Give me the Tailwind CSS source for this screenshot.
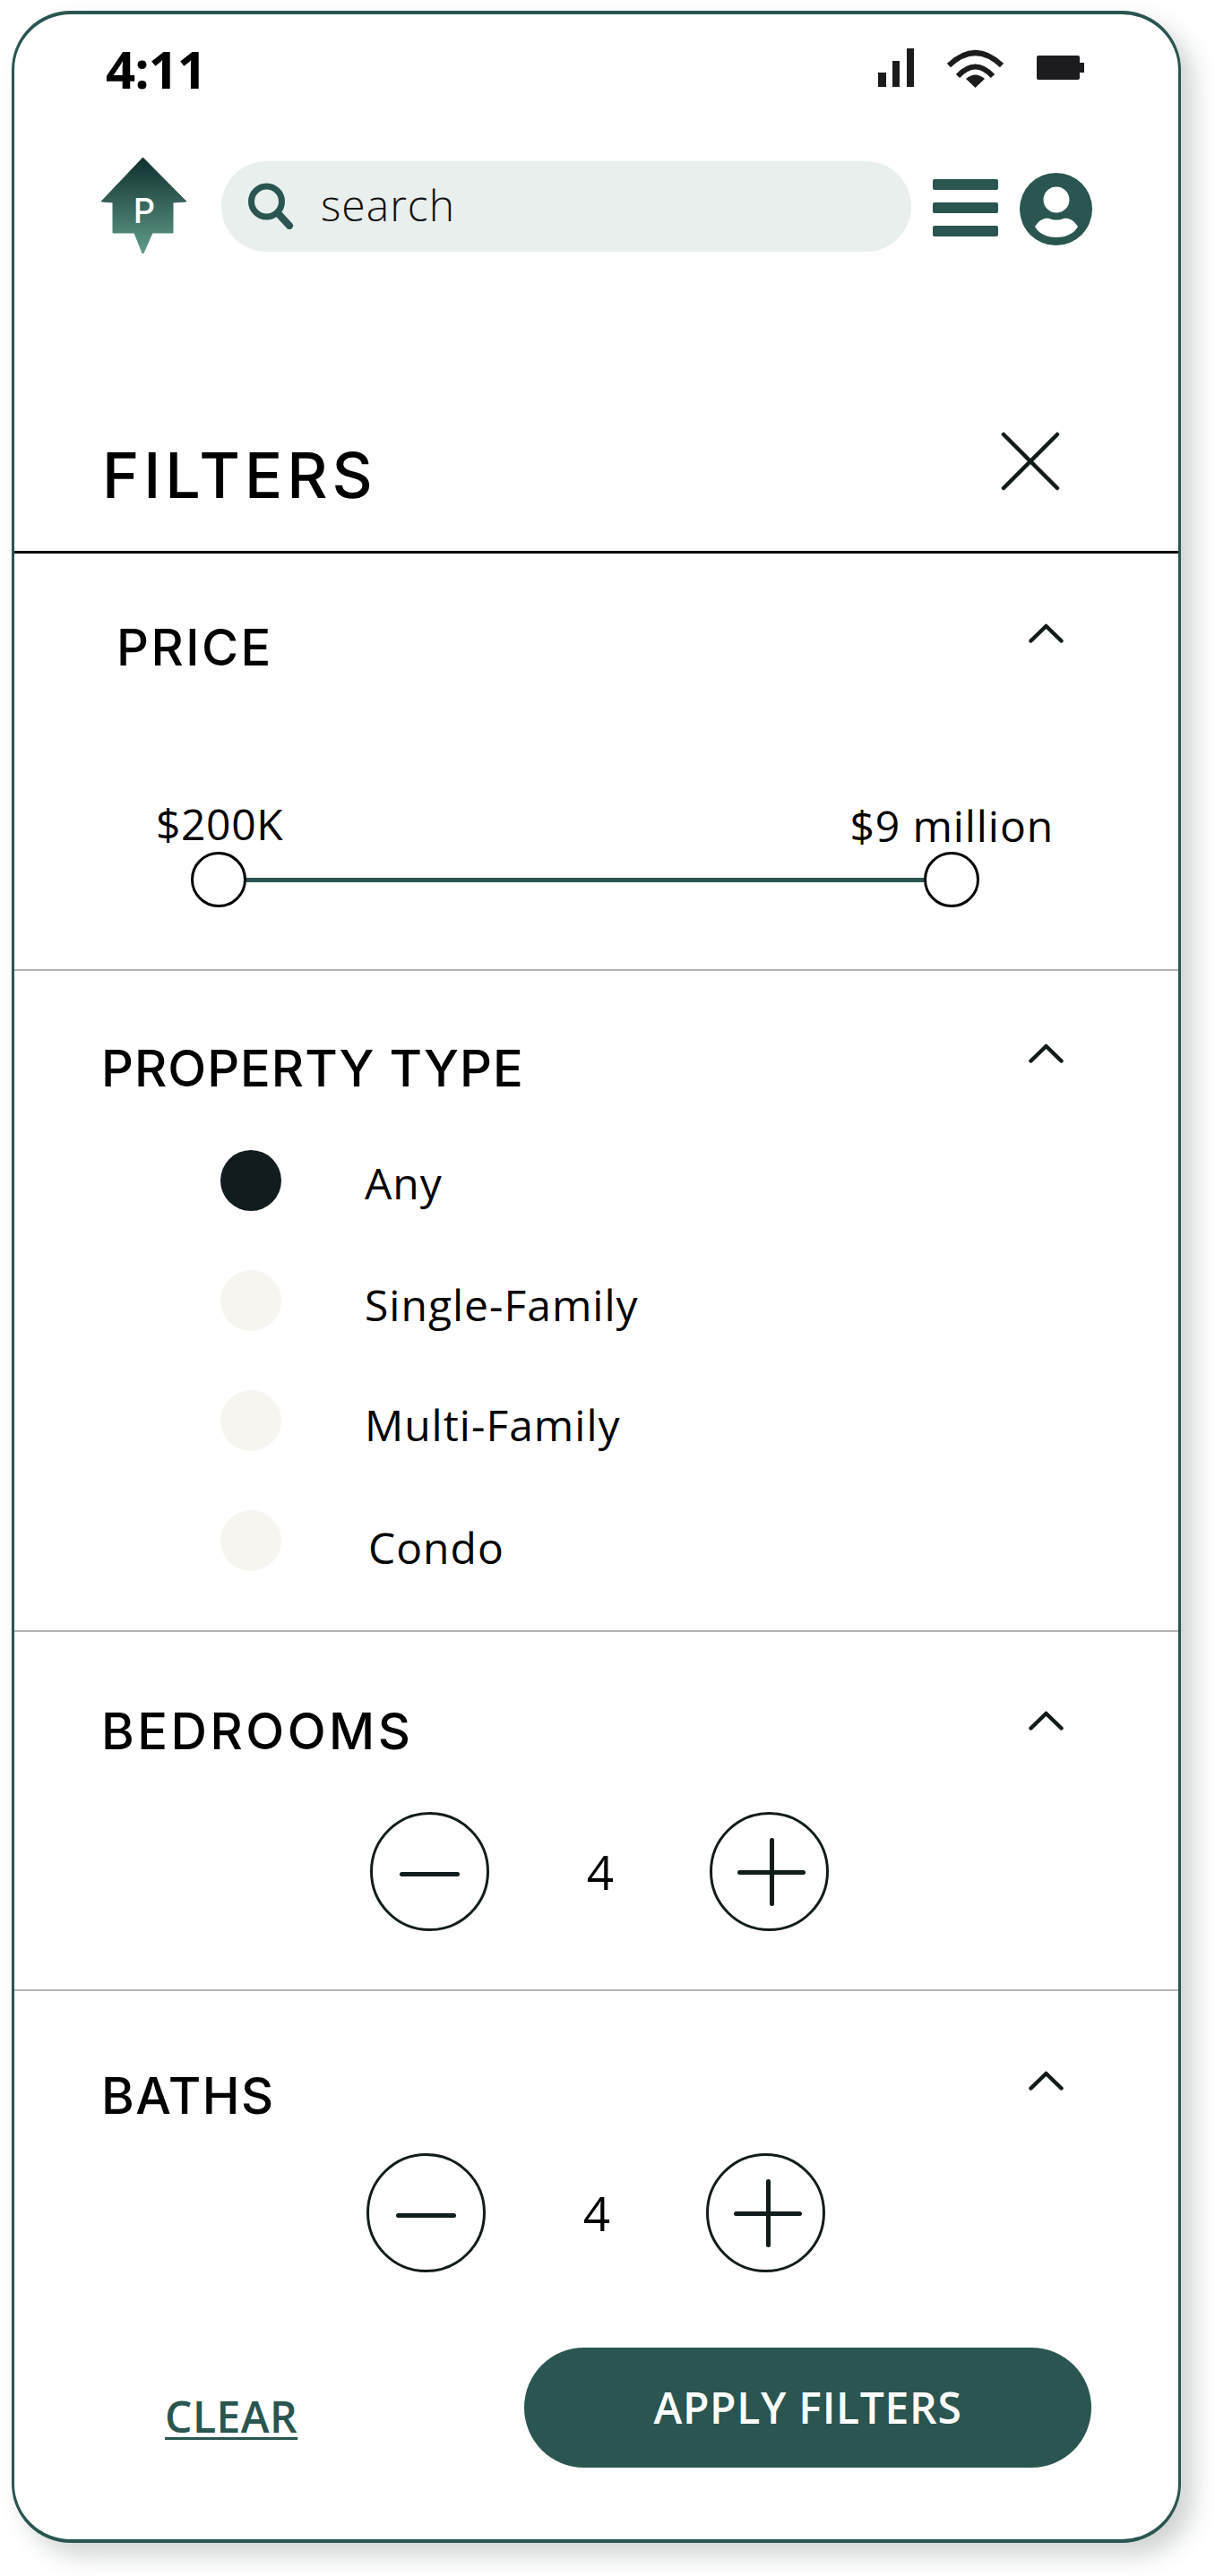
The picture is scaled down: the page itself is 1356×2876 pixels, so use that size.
<!doctype html>
<html>
<head>
  <meta charset="UTF-8">
  <meta name="viewport" content="width=device-width, initial-scale=1.0">
  <script src="https://cdn.jsdelivr.net/npm/@tailwindcss/browser@4"></script>
</head>
<body class="bg-white">
  <div class="w-[1356px] h-[2876px] pt-[12px] pl-[13px] overflow-hidden font-['Open_Sans',sans-serif] text-black">
    <div class="w-[1305px] h-[2827px] bg-white border-x-[3px] border-y-[4px] border-[#2a5550] rounded-[66px] shadow-[14px_14px_26px_rgba(40,60,55,0.22)]">

      <!-- status bar -->
      <div class="h-[122px] flex items-center justify-between pl-[102px] pr-[105px]">
        <span class="text-[58px] leading-none font-bold tracking-[-1px]">4:11</span>
        <div class="flex items-center gap-[37px] -mt-[3px]">
          <svg width="40" height="43" viewBox="0 0 40 43" fill="#1c1c1e"><rect x="0" y="27" width="9" height="16"/><rect x="16" y="14" width="8" height="29"/><rect x="32" y="0" width="8" height="43"/></svg>
          <svg width="63" height="45" viewBox="0 0 63 45" fill="none" stroke="#1c1c1e" stroke-width="6"><path d="M2 20 Q31.500 -8 61 20"/><path d="M12 32 Q31.500 11 51 32"/><path d="M21 35 Q31.500 26 42 35 L31.500 45 Z" fill="#1c1c1e" stroke="none"/></svg>
          <svg width="53" height="27" viewBox="0 0 53 27" fill="#1c1c1e"><rect x="0" y="0" width="48" height="27" rx="2"/><rect x="48" y="8" width="5" height="11"/></svg>
        </div>
      </div>

      <!-- header -->
      <div class="h-[184px] flex items-center pl-[96px]">
        <svg class="-mt-[2px]" width="96" height="107" viewBox="0 0 96 107">
          <defs><linearGradient id="logoFill" x1="0" y1="0" x2="0" y2="1"><stop offset="0" stop-color="#10302d"/><stop offset="1" stop-color="#5f9c8b"/></linearGradient></defs>
          <path d="M47.500 0 L96 49 L81 50 L81 84 L58 84 L48 107 L47 107 L38 84 L14 84 L14 50 L1 49 Z" fill="url(#logoFill)" stroke="url(#logoFill)" stroke-width="1" stroke-linejoin="round"/>
          <text x="49" y="73" text-anchor="middle" fill="#fff" font-size="38" font-weight="500" font-family="Inter, sans-serif">P</text>
        </svg>
        <div class="ml-[39px] w-[770px] h-[101px] rounded-full bg-[#e9efed] flex items-center pl-[30px]">
          <svg width="51" height="52" viewBox="0 0 51 52" fill="none" stroke="#2a5550"><circle cx="20.500" cy="21" r="17" stroke-width="7"/><path d="M34 35 L46 48" stroke-width="8" stroke-linecap="round"/></svg>
          <span class="ml-[30px] -mt-[3px] text-[48px] leading-none font-light tracking-[1px] text-[#111]">search</span>
        </div>
        <div class="ml-[24px] w-[73px] flex flex-col gap-[14px] mt-[3px]">
          <div class="h-[12px] rounded-[2px] bg-[#2a5550]"></div>
          <div class="h-[12px] rounded-[2px] bg-[#2a5550]"></div>
          <div class="h-[12px] rounded-[2px] bg-[#2a5550]"></div>
        </div>
        <svg class="ml-[24px] mt-[7px]" width="81" height="81" viewBox="0 0 81 81"><circle cx="40.500" cy="40.500" r="40.500" fill="#2a5550"/><circle cx="41" cy="30" r="14.500" fill="#fff"/><path d="M17 60 C22 52 28 50 33 51 C38 53 44 53 49 51 C54 50 60 52 65 60 C60 69 50 72 41 72 C32 72 22 69 17 60Z" fill="#fff"/></svg>
      </div>

      <!-- title -->
      <div class="h-[296px] border-b-[3px] border-black flex justify-between items-start pl-[98px] pr-[132px]">
        <h1 class="mt-[173px] text-[70px] leading-[72px] font-['Inter',sans-serif] font-medium tracking-[5px]">FILTERS</h1>
        <svg class="mt-[160px]" width="66" height="66" viewBox="0 0 66 66" stroke="#111c18" stroke-width="4.500" stroke-linecap="round"><path d="M3 3 L63 63 M63 3 L3 63"/></svg>
      </div>

      <!-- price -->
      <section class="h-[466px] border-b-2 border-[#b4b4b4] relative pt-[77px] pl-[114px] pr-[128px]">
        <div class="flex justify-between items-start">
          <h2 class="text-[56px] leading-[56px] font-['Inter',sans-serif] font-medium tracking-[2.500px]">PRICE</h2>
          <svg class="mt-[1px]" width="39" height="22" viewBox="0 0 39 22" fill="none" stroke="#111c18" stroke-width="4.500" stroke-linecap="round" stroke-linejoin="round"><path d="M2.500 19.500 L19.500 3 L36.500 19.500"/></svg>
        </div>
        <div class="absolute left-[158px] top-[274px] text-[48px] leading-[56px] tracking-[0.600px]">$200K</div>
        <div class="absolute right-[139px] top-[276px] text-[48px] leading-[56px] tracking-[0.900px]">$9 million</div>
        <div class="absolute left-[197px] right-[222px] top-[333px] flex items-center">
          <div class="w-[62px] h-[62px] rounded-full border-[3px] border-black bg-white shrink-0"></div>
          <div class="h-[5px] flex-1 bg-[#2a5550]"></div>
          <div class="w-[62px] h-[62px] rounded-full border-[3px] border-black bg-white shrink-0"></div>
        </div>
      </section>

      <!-- property type -->
      <section class="h-[738px] border-b-2 border-[#b4b4b4] pt-[81px] pl-[97px] pr-[128px]">
        <div class="flex justify-between items-start">
          <h2 class="text-[56px] leading-[56px] font-['Inter',sans-serif] font-medium tracking-[1px]">PROPERTY TYPE</h2>
          <svg width="39" height="22" viewBox="0 0 39 22" fill="none" stroke="#111c18" stroke-width="4.500" stroke-linecap="round" stroke-linejoin="round"><path d="M2.500 19.500 L19.500 3 L36.500 19.500"/></svg>
        </div>
        <div class="mt-[63px] pl-[133px] flex flex-col gap-[66px]">
          <div class="flex items-center h-[68px]"><span class="w-[68px] h-[68px] rounded-full bg-[#101c1e]"></span><span class="ml-[93px] text-[48px] leading-[56px] mt-[6px] tracking-[1px]">Any</span></div>
          <div class="flex items-center h-[68px]"><span class="w-[68px] h-[68px] rounded-full bg-[#f6f5f0]"></span><span class="ml-[93px] text-[48px] leading-[56px] mt-[10px] tracking-[1px]">Single-Family</span></div>
          <div class="flex items-center h-[68px]"><span class="w-[68px] h-[68px] rounded-full bg-[#f6f5f0]"></span><span class="ml-[93px] text-[48px] leading-[56px] mt-[10px] tracking-[1px]">Multi-Family</span></div>
          <div class="flex items-center h-[68px]"><span class="w-[68px] h-[68px] rounded-full bg-[#f6f5f0]"></span><span class="ml-[97px] text-[48px] leading-[56px] mt-[16px] tracking-[1px]">Condo</span></div>
        </div>
      </section>

      <!-- bedrooms -->
      <section class="h-[401px] border-b-2 border-[#b4b4b4] pt-[83px] pl-[97px] pr-[128px]">
        <div class="flex justify-between items-start">
          <h2 class="text-[56px] leading-[56px] font-['Inter',sans-serif] font-medium tracking-[3.500px]">BEDROOMS</h2>
          <svg class="mt-[5px]" width="39" height="22" viewBox="0 0 39 22" fill="none" stroke="#111c18" stroke-width="4.500" stroke-linecap="round" stroke-linejoin="round"><path d="M2.500 19.500 L19.500 3 L36.500 19.500"/></svg>
        </div>
        <div class="mt-[62px] pl-[300px] flex items-center">
          <button class="w-[133px] h-[133px] rounded-full border-[3px] border-[#111c1c] flex items-center justify-center"><span class="w-[67px] h-[5px] rounded-full bg-[#111c1c] mt-[6px]"></span></button>
          <span class="w-[246px] pl-[2px] text-center text-[53px] leading-none">4</span>
          <button class="w-[133px] h-[133px] rounded-full border-[3px] border-[#111c1c] relative"><span class="absolute left-[28px] w-[76px] top-[62px] h-[5px] rounded-full bg-[#111c1c]"></span><span class="absolute left-[64px] top-[26px] w-[5px] h-[76px] rounded-full bg-[#111c1c]"></span></button>
        </div>
      </section>

      <!-- baths -->
      <section class="h-[398px] pt-[89px] pl-[97px] pr-[128px]">
        <div class="flex justify-between items-start">
          <h2 class="text-[56px] leading-[56px] font-['Inter',sans-serif] font-medium tracking-[1.500px]">BATHS</h2>
          <svg width="39" height="22" viewBox="0 0 39 22" fill="none" stroke="#111c18" stroke-width="4.500" stroke-linecap="round" stroke-linejoin="round"><path d="M2.500 19.500 L19.500 3 L36.500 19.500"/></svg>
        </div>
        <div class="mt-[36px] pl-[296px] flex items-center">
          <button class="w-[133px] h-[133px] rounded-full border-[3px] border-[#111c1c] flex items-center justify-center"><span class="w-[67px] h-[5px] rounded-full bg-[#111c1c] mt-[6px]"></span></button>
          <span class="w-[246px] pl-[2px] text-center text-[53px] leading-none">4</span>
          <button class="w-[133px] h-[133px] rounded-full border-[3px] border-[#111c1c] relative"><span class="absolute left-[28px] w-[76px] top-[62px] h-[5px] rounded-full bg-[#111c1c]"></span><span class="absolute left-[64px] top-[26px] w-[5px] h-[76px] rounded-full bg-[#111c1c]"></span></button>
        </div>
      </section>

      <!-- footer -->
      <div class="flex items-start justify-between pl-[168px] pr-[97px]">
        <a class="mt-[49px] text-[48px] leading-[56px] font-semibold tracking-[0.500px] text-[#2a5550] underline underline-offset-[5px] decoration-[3px]">CLEAR</a>
        <button class="w-[633px] h-[134px] rounded-full bg-[#2a5550] text-white text-[48px] font-semibold leading-none tracking-[0.700px]">APPLY FILTERS</button>
      </div>
    </div>
  </div>
</body>
</html>
